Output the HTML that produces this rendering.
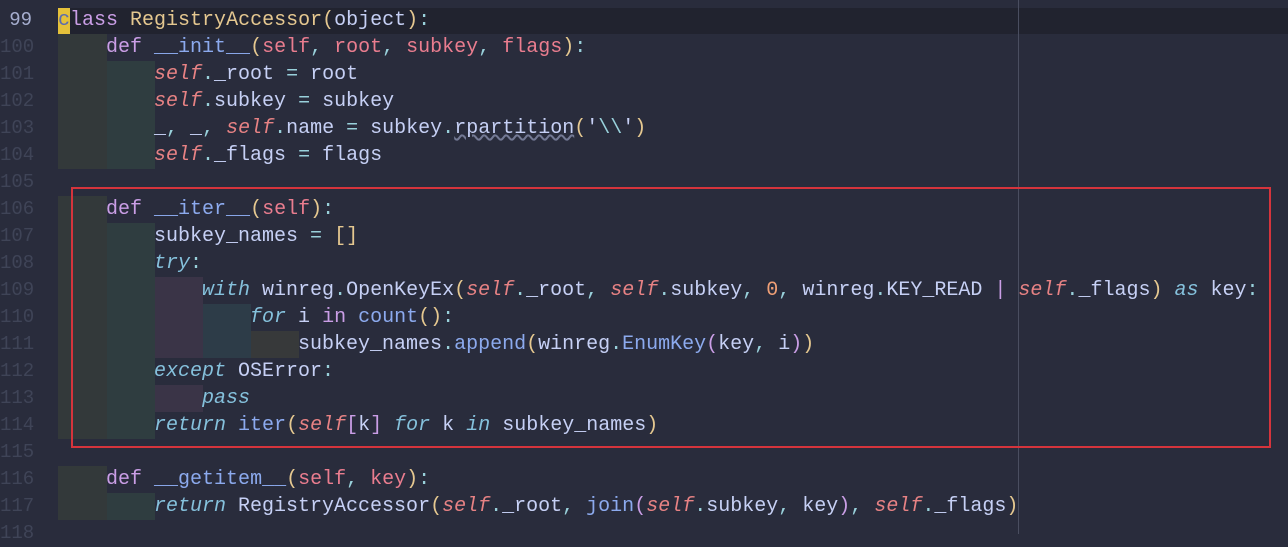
<!DOCTYPE html>
<html><head><meta charset="utf-8"><style>
html,body{margin:0;padding:0}
body{width:1288px;height:534px;background:#292c3c;position:relative;overflow:hidden;font-family:"Liberation Mono",monospace;font-size:20px;color:#c6d0f5}
.l{position:absolute;left:58px;height:27px;line-height:27px;white-space:pre}
.n{position:absolute;left:0;width:32px;text-align:right;height:27px;line-height:27px;color:#3f4457;font-size:19px;white-space:pre}
.b{position:absolute}
.k{color:#ca9ee6}.s{color:#e78284;font-style:italic}.f{color:#8caaee}.c{color:#e5c890}
.p{color:#e5c890}.o{color:#99d1db}.pa{color:#ea7d8f}.i{color:#85c1dc;font-style:italic}
.num{color:#ef9f76}.br{color:#ca9ee6}
</style></head><body>
<div class="b" style="left:58px;top:8px;width:1230px;height:26px;background:#21232f"></div>
<div class="b" style="left:58px;top:8px;width:12px;height:26px;background:#e5c13a"></div>
<div class="b" style="left:1018px;top:0;width:1px;height:534px;background:#4a4e60"></div>
<div class="b" style="left:58px;top:34px;width:49px;height:135px;background:#33393a"></div>
<div class="b" style="left:107px;top:61px;width:48px;height:108px;background:#2f3d40"></div>
<div class="b" style="left:58px;top:196px;width:49px;height:243px;background:#33393a"></div>
<div class="b" style="left:107px;top:223px;width:48px;height:216px;background:#2f3d40"></div>
<div class="b" style="left:155px;top:277px;width:48px;height:81px;background:#3a3447"></div>
<div class="b" style="left:155px;top:385px;width:48px;height:27px;background:#3a3447"></div>
<div class="b" style="left:203px;top:304px;width:48px;height:54px;background:#2d3c48"></div>
<div class="b" style="left:251px;top:331px;width:48px;height:27px;background:#37393a"></div>
<div class="b" style="left:58px;top:466px;width:49px;height:54px;background:#33393a"></div>
<div class="b" style="left:107px;top:493px;width:48px;height:27px;background:#2f3d40"></div>
<div class="b" style="left:71px;top:187px;width:1196px;height:257px;border:2px solid #d5343c"></div>

<div class="n" style="top:7px;color:#a5adce">99</div>
<div class="n" style="top:34px">100</div><div class="n" style="top:61px">101</div><div class="n" style="top:88px">102</div>
<div class="n" style="top:115px">103</div><div class="n" style="top:142px">104</div><div class="n" style="top:169px">105</div>
<div class="n" style="top:196px">106</div><div class="n" style="top:223px">107</div><div class="n" style="top:250px">108</div>
<div class="n" style="top:277px">109</div><div class="n" style="top:304px">110</div><div class="n" style="top:331px">111</div>
<div class="n" style="top:358px">112</div><div class="n" style="top:385px">113</div><div class="n" style="top:412px">114</div>
<div class="n" style="top:439px">115</div><div class="n" style="top:466px">116</div><div class="n" style="top:493px">117</div>
<div class="n" style="top:520px">118</div>

<div class="l" style="top:7px"><span style="color:#5a6bb0">c</span><span class="k">lass</span> <span class="c">RegistryAccessor</span><span class="p">(</span>object<span class="p">)</span><span class="o">:</span></div>
<div class="l" style="top:34px">    <span class="k">def</span> <span class="f">__init__</span><span class="p">(</span><span class="pa">self</span><span class="o">,</span> <span class="pa">root</span><span class="o">,</span> <span class="pa">subkey</span><span class="o">,</span> <span class="pa">flags</span><span class="p">)</span><span class="o">:</span></div>
<div class="l" style="top:61px">        <span class="s">self</span><span class="o">.</span>_root <span class="o">=</span> root</div>
<div class="l" style="top:88px">        <span class="s">self</span><span class="o">.</span>subkey <span class="o">=</span> subkey</div>
<div class="l" style="top:115px">        _<span class="o">,</span> _<span class="o">,</span> <span class="s">self</span><span class="o">.</span>name <span class="o">=</span> subkey<span class="o">.</span><span style="text-decoration:underline wavy #737994">rpartition</span><span class="p">(</span>'<span class="o">\\</span>'<span class="p">)</span></div>
<div class="l" style="top:142px">        <span class="s">self</span><span class="o">.</span>_flags <span class="o">=</span> flags</div>
<div class="l" style="top:196px">    <span class="k">def</span> <span class="f">__iter__</span><span class="p">(</span><span class="pa">self</span><span class="p">)</span><span class="o">:</span></div>
<div class="l" style="top:223px">        subkey_names <span class="o">=</span> <span class="p">[]</span></div>
<div class="l" style="top:250px">        <span class="i">try</span><span class="o">:</span></div>
<div class="l" style="top:277px">            <span class="i">with</span> winreg<span class="o">.</span>OpenKeyEx<span class="p">(</span><span class="s">self</span><span class="o">.</span>_root<span class="o">,</span> <span class="s">self</span><span class="o">.</span>subkey<span class="o">,</span> <span class="num">0</span><span class="o">,</span> winreg<span class="o">.</span>KEY_READ <span class="br">|</span> <span class="s">self</span><span class="o">.</span>_flags<span class="p">)</span> <span class="i">as</span> key<span class="o">:</span></div>
<div class="l" style="top:304px">                <span class="i">for</span> i <span class="k">in</span> <span class="f">count</span><span class="p">()</span><span class="o">:</span></div>
<div class="l" style="top:331px">                    subkey_names<span class="o">.</span><span class="f">append</span><span class="p">(</span>winreg<span class="o">.</span><span class="f">EnumKey</span><span class="br">(</span>key<span class="o">,</span> i<span class="br">)</span><span class="p">)</span></div>
<div class="l" style="top:358px">        <span class="i">except</span> OSError<span class="o">:</span></div>
<div class="l" style="top:385px">            <span class="i">pass</span></div>
<div class="l" style="top:412px">        <span class="i">return</span> <span class="f">iter</span><span class="p">(</span><span class="s">self</span><span class="br">[</span>k<span class="br">]</span> <span class="i">for</span> k <span class="i">in</span> subkey_names<span class="p">)</span></div>
<div class="l" style="top:466px">    <span class="k">def</span> <span class="f">__getitem__</span><span class="p">(</span><span class="pa">self</span><span class="o">,</span> <span class="pa">key</span><span class="p">)</span><span class="o">:</span></div>
<div class="l" style="top:493px">        <span class="i">return</span> RegistryAccessor<span class="p">(</span><span class="s">self</span><span class="o">.</span>_root<span class="o">,</span> <span class="f">join</span><span class="br">(</span><span class="s">self</span><span class="o">.</span>subkey<span class="o">,</span> key<span class="br">)</span><span class="o">,</span> <span class="s">self</span><span class="o">.</span>_flags<span class="p">)</span></div>
</body></html>
